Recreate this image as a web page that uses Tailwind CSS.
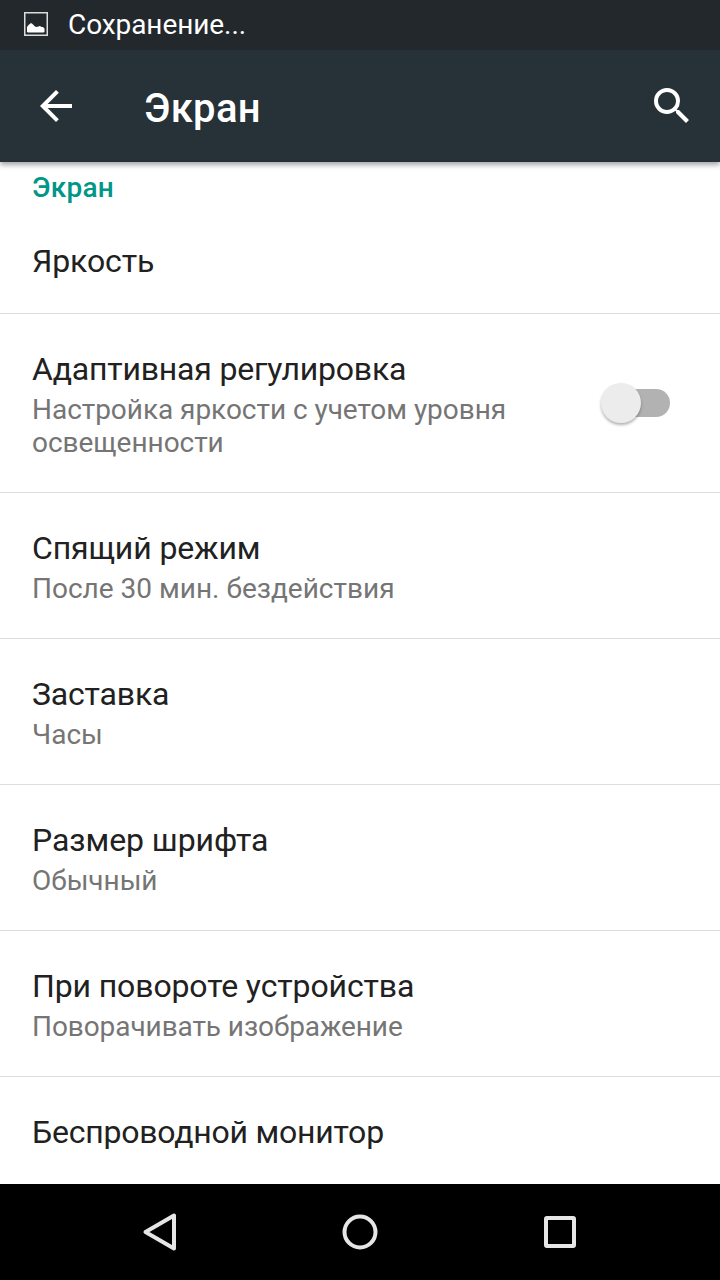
<!DOCTYPE html>
<html lang="ru">
<head>
    <meta charset="UTF-8">
    <meta name="viewport" content="width=device-width, initial-scale=1.0">
    <title>Экран</title>
    <script src="https://cdn.jsdelivr.net/npm/@tailwindcss/browser@4"></script>
</head>
<body class="bg-white font-[Roboto,'Noto_Sans',sans-serif]">
    <div class="w-[720px] h-[1280px] flex flex-col overflow-hidden bg-white text-[#212121]">

        <!-- Status bar -->
        <div class="h-[50px] shrink-0 bg-[#22282b] flex items-center pl-6 text-white">
            <svg class="w-6 h-6 mr-5 -mt-0.5" viewBox="0 0 24 24" fill="none">
                <rect x="0.75" y="0.75" width="22.5" height="22.5" stroke="#dcdcdc" stroke-width="1.5"/>
                <path d="M3 20v-5l1.500-2 2.500-2 1.500 1 2.500 2.500 1.500.5 3.500-1 1.500 1 1.500 0 1.500 1.500v3.500l-1 .5H4z" fill="#fff"/>
            </svg>
            <span class="text-[28px] leading-[33px] -mt-0.5 tracking-[-0.08px]">Сохранение...</span>
        </div>

        <!-- Toolbar -->
        <header class="h-28 shrink-0 relative bg-[#263238] flex items-center text-white shadow-[0_3px_5px_rgba(0,0,0,0.35)] [clip-path:inset(0_0_-12px_0)]">
            <svg class="w-12 h-12 ml-8" viewBox="0 0 24 24" fill="#fff">
                <path d="M20 11H7.830l5.590-5.590L12 4l-8 8 8 8 1.410-1.410L7.830 13H20v-2z"/>
            </svg>
            <h1 class="ml-16 mt-1.5 text-[40px] leading-[48px] font-medium tracking-[0.3px]">Экран</h1>
            <svg class="w-12 h-12 ml-auto mr-6" viewBox="0 0 24 24" fill="#fff">
                <path d="M15.500 14h-.790l-.280-.270A6.471 6.471 0 0 0 16 9.500 6.500 6.500 0 1 0 9.500 16c1.610 0 3.090-.590 4.230-1.570l.270.280v.790l5 4.990L20.490 19l-4.990-5zm-6 0C7.010 14 5 11.990 5 9.500S7.010 5 9.500 5 14 7.010 14 9.500 11.990 14 9.500 14z"/>
            </svg>
        </header>

        <!-- Settings list -->
        <main class="h-[1022px] shrink-0 overflow-hidden">
            <h2 class="pt-[9px] px-8 text-[28px] leading-[33px] font-medium tracking-[0.25px] text-[#009688]">Экран</h2>

            <div class="px-8 pt-[38px] pb-[33px] border-b border-[#dedede]">
                <div class="text-[32px] leading-[38px] tracking-[-0.12px]">Яркость</div>
            </div>

            <div class="flex items-center pl-8 pr-[50px] pt-9 pb-[33px] border-b border-[#dedede]">
                <div class="w-[520px]">
                    <div class="text-[32px] leading-[38px] tracking-[-0.2px]">Адаптивная регулировка</div>
                    <div class="mt-[5px] text-[28px] leading-[33px] tracking-[-0.04px] text-[#757575]">Настройка яркости с учетом уровня освещенности</div>
                </div>
                <div class="ml-auto -mt-[3px] w-[70px] h-10 flex items-center relative">
                    <div class="ml-auto w-14 h-7 rounded-full bg-[#b2b2b2]"></div>
                    <div class="absolute left-[1px] top-0 size-10 rounded-full bg-[#ececec] shadow-[0_2px_3px_rgba(0,0,0,0.3)]"></div>
                </div>
            </div>

            <div class="px-8 pt-9 pb-[33px] border-b border-[#dedede]">
                <div class="text-[32px] leading-[38px] tracking-[-0.12px]">Спящий режим</div>
                <div class="mt-[5px] text-[28px] leading-[33px] text-[#757575]">После 30 мин. бездействия</div>
            </div>

            <div class="px-8 pt-9 pb-[33px] border-b border-[#dedede]">
                <div class="text-[32px] leading-[38px] tracking-[-0.18px]">Заставка</div>
                <div class="mt-[5px] text-[28px] leading-[33px] text-[#757575]">Часы</div>
            </div>

            <div class="px-8 pt-9 pb-[33px] border-b border-[#dedede]">
                <div class="text-[32px] leading-[38px] tracking-[-0.06px]">Размер шрифта</div>
                <div class="mt-[5px] text-[28px] leading-[33px] tracking-[-0.04px] text-[#757575]">Обычный</div>
            </div>

            <div class="px-8 pt-9 pb-[33px] border-b border-[#dedede]">
                <div class="text-[32px] leading-[38px] tracking-[-0.12px]">При повороте устройства</div>
                <div class="mt-[5px] text-[28px] leading-[33px] tracking-[-0.08px] text-[#757575]">Поворачивать изображение</div>
            </div>

            <div class="px-8 pt-9">
                <div class="text-[32px] leading-[38px] tracking-[-0.22px]">Беспроводной монитор</div>
            </div>
        </main>

        <!-- Navigation bar -->
        <nav class="h-24 shrink-0 bg-black flex items-center justify-center gap-[152px]">
            <svg class="size-12" viewBox="0 0 48 48" fill="none" stroke="#e6e6e6" stroke-width="4" stroke-linejoin="round">
                <path d="M9.500 24L38 7.500v33z"/>
            </svg>
            <svg class="size-12" viewBox="0 0 48 48" fill="none" stroke="#e6e6e6" stroke-width="4">
                <circle cx="24" cy="24" r="15.500"/>
            </svg>
            <svg class="size-12" viewBox="0 0 48 48" fill="none" stroke="#e6e6e6" stroke-width="4">
                <rect x="10" y="10" width="28" height="28" rx="1"/>
            </svg>
        </nav>
    </div>
</body>
</html>
